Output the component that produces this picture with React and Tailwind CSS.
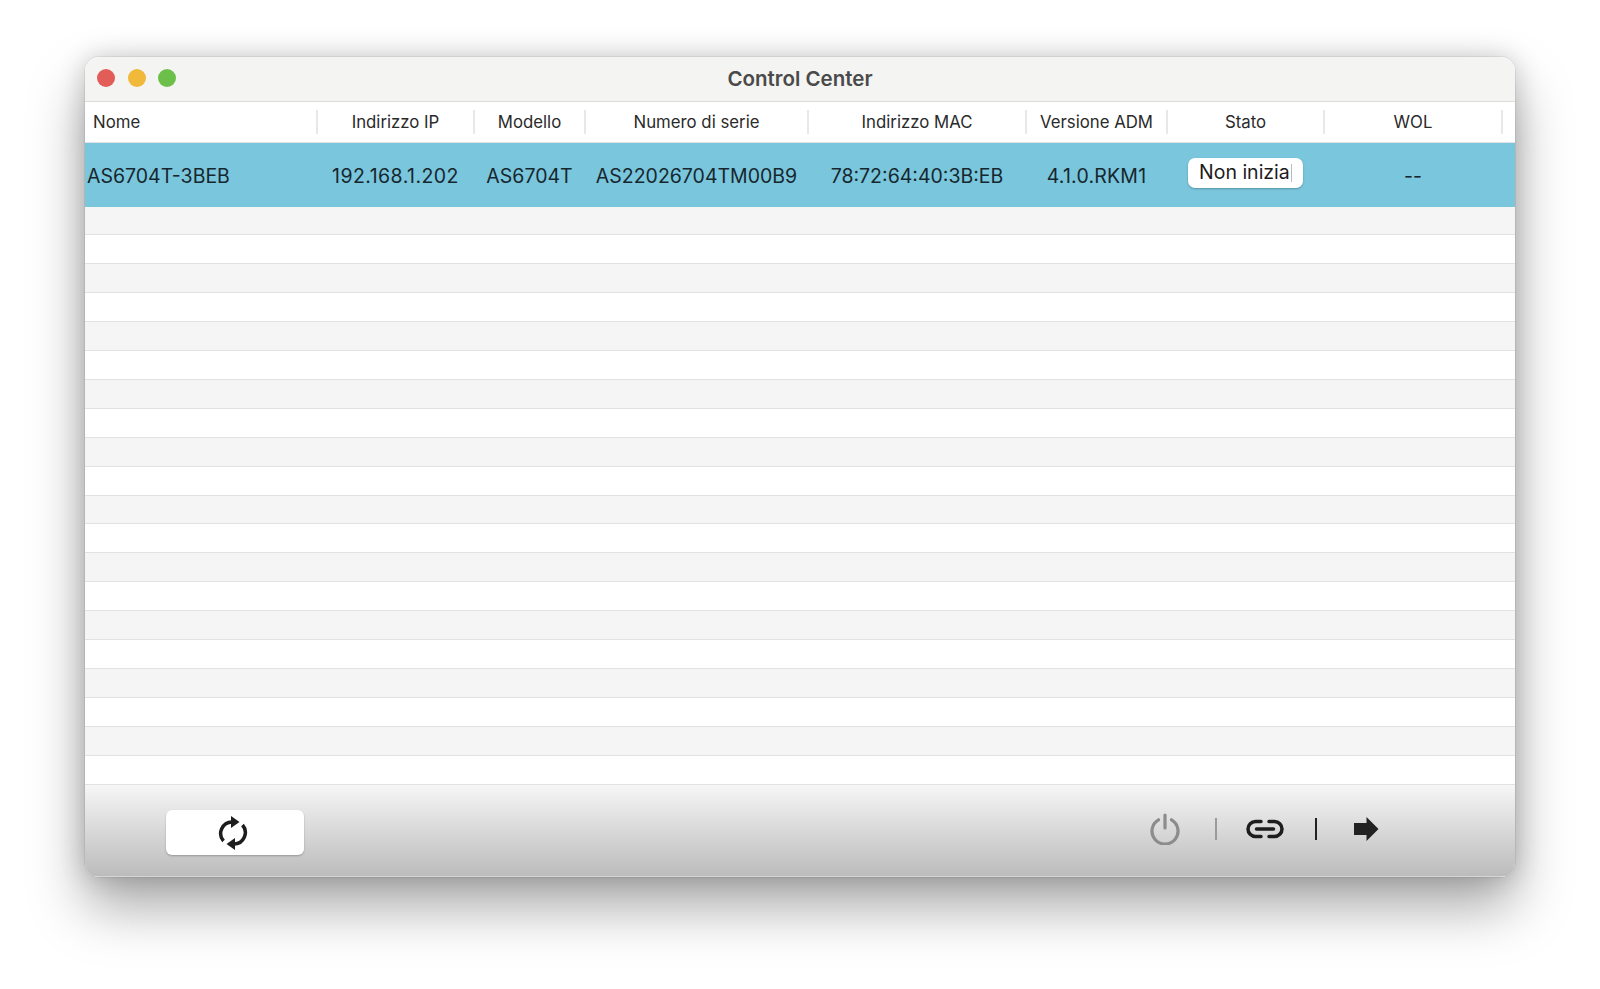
import React from 'react';

const columns = 'grid grid-cols-[233px_157px_111px_223px_218px_141px_157px_178px_12px]';
const font = "font-['Inter','Liberation_Sans',sans-serif]";

const headers = ['Indirizzo IP', 'Modello', 'Numero di serie', 'Indirizzo MAC', 'Versione ADM', 'Stato', 'WOL'];
const values = [
    { text: '192.168.1.202', cls: 'tracking-[0.45px]' },
    { text: 'AS6704T', cls: '' },
    { text: 'AS22026704TM00B9', cls: '' },
    { text: '78:72:64:40:3B:EB', cls: '' },
    { text: '4.1.0.RKM1', cls: 'tracking-[0.2px]' },
];
const emptyRows = Array.from({ length: 20 }, (_, i) => i);

const PowerIcon = () => (
    <svg width="32" height="32" viewBox="0 0 32 32" fill="none" stroke="#8c8c8c" strokeWidth="3.200" strokeLinecap="round">
        <path d="M9.500 6.800A13 13 0 1 0 22.500 6.800" />
        <path d="M16 2v13" />
    </svg>
);

const LinkIcon = () => (
    <svg width="38" height="20" viewBox="0 0 38 20" fill="none" stroke="#1d1d1d" strokeWidth="3.500" strokeLinecap="round">
        <path d="M15 2.500H9.500a7.500 7.500 0 0 0 0 15H15" />
        <path d="M23 2.500h5.500a7.500 7.500 0 0 1 0 15H23" />
        <path d="M10.500 10h17" />
    </svg>
);

const ArrowIcon = () => (
    <svg width="26" height="24" viewBox="0 0 26 24">
        <path d="M1 6h12.500V0L25.500 12 13.500 24v-6H1z" fill="#222222" />
    </svg>
);

const RefreshIcon = () => (
    <svg width="30" height="34" viewBox="0 0 30 34" fill="none">
        <path d="M5.500 25A11.500 11.500 0 0 1 14 6" stroke="#1d1d1d" strokeWidth="3.500" />
        <path d="M24.500 9A11.500 11.500 0 0 1 16 28" stroke="#1d1d1d" strokeWidth="3.500" />
        <path d="M13 0l8.500 6L13 12z" fill="#1d1d1d" />
        <path d="M17 22l-8.500 6 8.500 6z" fill="#1d1d1d" />
    </svg>
);

const App = () => {
    return (
        <div className={`h-[989px] w-[1600px] overflow-hidden bg-white pl-[85px] pt-[57px] ${font}`}>
            <div className="flex h-[820px] w-[1430px] flex-col overflow-hidden rounded-[14px] bg-white shadow-[0_0_0_1px_rgba(0,0,0,0.06),0_30px_55px_rgba(0,0,0,0.34),0_0_26px_rgba(0,0,0,0.18)]">
                <div className="relative flex h-[45px] shrink-0 items-center justify-center border-b border-[#dcdcda] bg-[#f4f4f2]">
                    <div className="absolute left-[12px] top-[12px] flex gap-[12.500px]">
                        <span className="h-[18px] w-[18px] rounded-full bg-[#e25c58]" />
                        <span className="h-[18px] w-[18px] rounded-full bg-[#f0b93a]" />
                        <span className="h-[18px] w-[18px] rounded-full bg-[#6cc04a]" />
                    </div>
                    <span className="text-[20.500px] font-semibold text-[#4a4a4a]">Control Center</span>
                </div>

                <div className={`${columns} h-[41px] shrink-0 items-center border-b border-[#e4e4e4] bg-white text-[16.800px] text-[#2a2a2a]`}>
                    <div className="flex h-[24px] items-center border-r-2 border-[#e8e8e8] pl-[8px] pt-[2px]">Nome</div>
                    {headers.map((title) => (
                        <div key={title} className="flex h-[24px] items-center justify-center border-r-2 border-[#e8e8e8] pt-[2px]">
                            {title}
                        </div>
                    ))}
                </div>

                <div className={`${columns} h-[63.500px] shrink-0 items-center bg-[#7ac6dd] pt-[4px] text-[19.500px] text-[#17272e]`}>
                    <div className="pl-[2px]">AS6704T-3BEB</div>
                    {values.map((value) => (
                        <div key={value.text} className={`whitespace-nowrap pr-[2px] text-center ${value.cls}`}>{value.text}</div>
                    ))}
                    <div className="flex justify-center pr-[2px]">
                        <div className="mb-[8px] flex h-[30px] w-[115px] items-center overflow-hidden rounded-[7px] bg-white pl-[11px] text-[#1c1c1c] shadow-[0_1px_2px_rgba(0,0,0,0.25)]">
                            <span className="whitespace-nowrap">Non inizia</span>
                            <span className="ml-[1px] h-[18px] w-px shrink-0 bg-[#bbbbbb]" />
                        </div>
                    </div>
                    <div className="pr-[2px] text-center">--</div>
                    <div />
                </div>

                <div className="flex h-[578px] shrink-0 flex-col">
                    {emptyRows.map((row) => (
                        <div key={row} className={`flex-1 border-b border-[#e2e2e2] ${row % 2 === 0 ? 'bg-[#f5f5f5]' : 'bg-white'}`} />
                    ))}
                </div>

                <div className="flex flex-1 items-start justify-between border-b border-[#d6d6d6] bg-gradient-to-b from-[#f6f6f6] to-[#bcbcbc] pl-[81px] pt-[25px]">
                    <button className="flex h-[45px] w-[138px] items-center justify-center rounded-[6px] bg-white pr-[4px] pt-[2px] shadow-[0_1px_2px_rgba(0,0,0,0.25)]">
                        <RefreshIcon />
                    </button>
                    <div className="mr-[136px] mt-[3px] flex items-center">
                        <PowerIcon />
                        <span className="ml-[34px] mr-[29px] h-[22px] w-[2px] bg-[#9a9a9a]" />
                        <LinkIcon />
                        <span className="ml-[31px] mr-[36px] h-[22px] w-[2px] bg-[#222222]" />
                        <ArrowIcon />
                    </div>
                </div>
            </div>
        </div>
    );
};

export default App;
